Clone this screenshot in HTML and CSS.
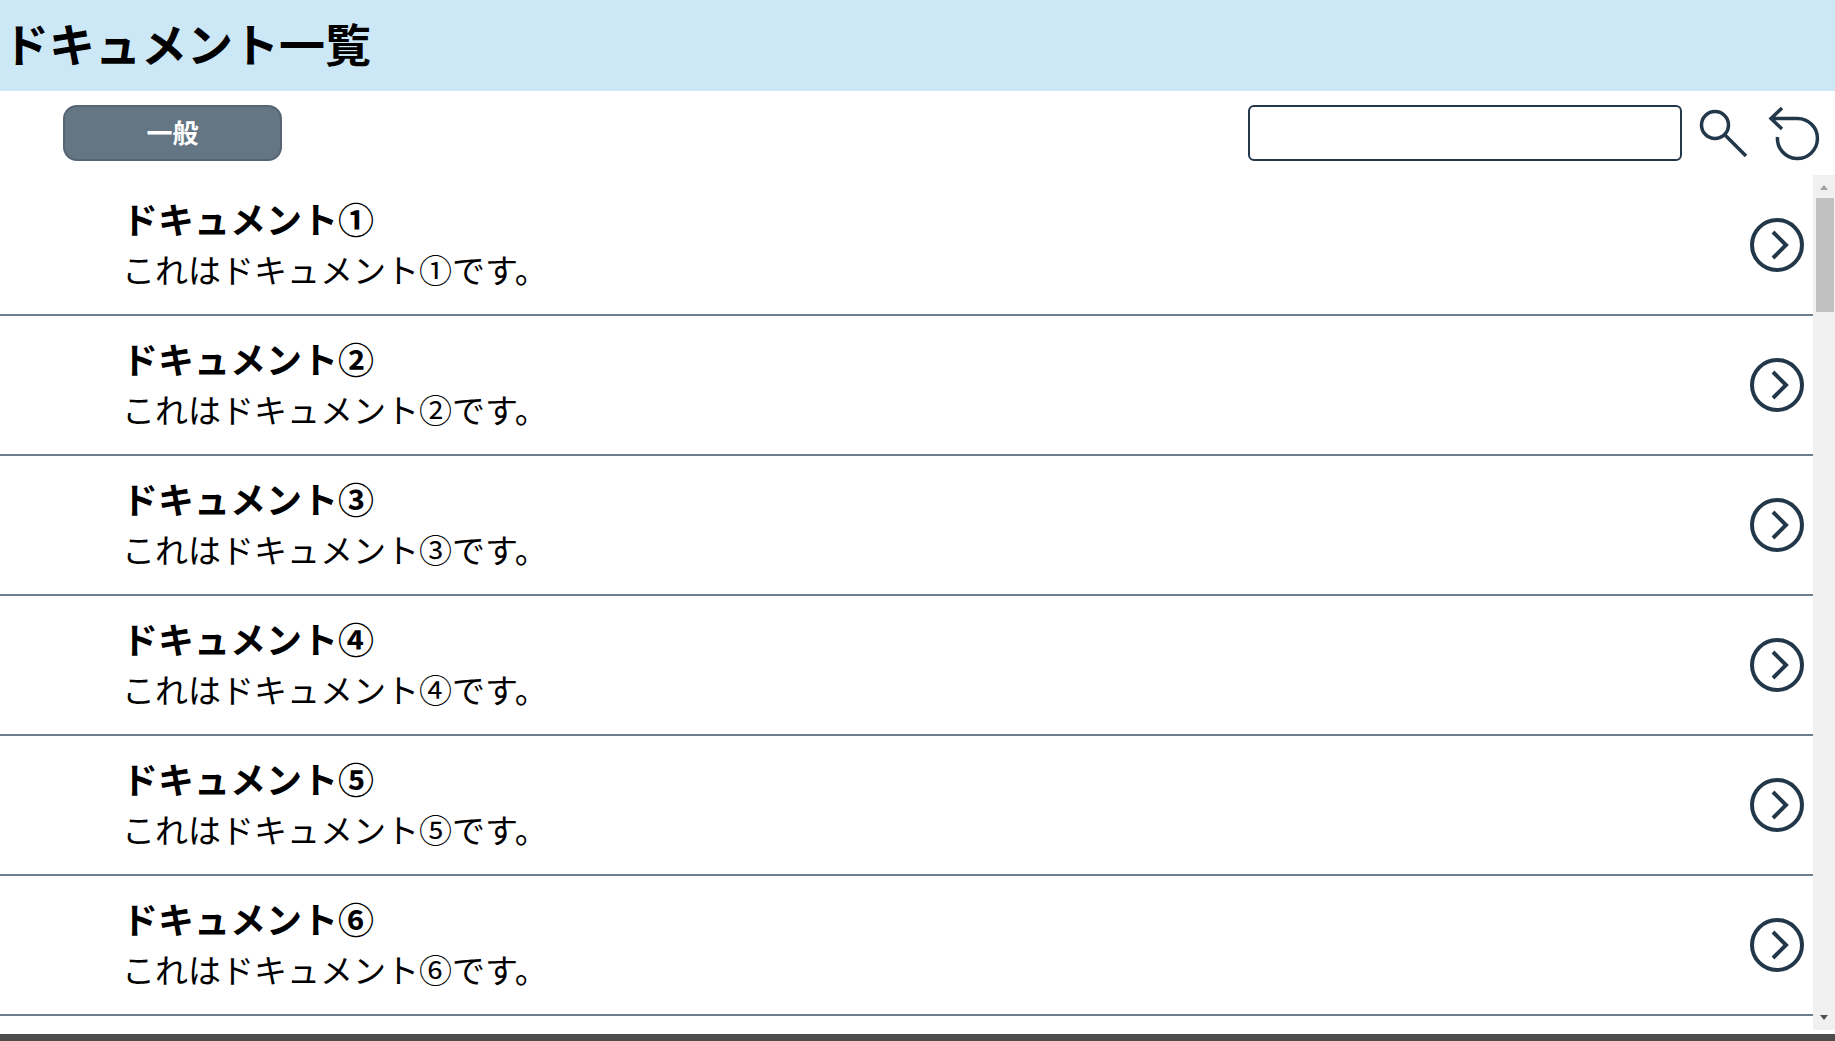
FILE: index.html
```
<!DOCTYPE html>
<html lang="ja">
<head>
    <meta charset="UTF-8">
    <meta name="viewport" content="width=device-width, initial-scale=1.0">
    <title>ドキュメント一覧</title>
    <link rel="stylesheet" href="styles.css">
</head>
<body>
    <header class="header">
        <h1>ドキュメント一覧</h1>
    </header>

    <!-- Category and search -->
    <div class="toolbar">
        <button type="button" class="category">一般</button>
        <form class="search" onsubmit="return false">
            <input type="text" id="keyword" class="keyword" aria-label="検索">
            <button type="submit" class="icon-btn" aria-label="検索">
                <svg width="54" height="56" viewBox="0 0 54 56">
                    <circle cx="18" cy="20" r="13.500"/>
                    <path d="M27.500 29.500 L49 51"/>
                </svg>
            </button>
            <button type="reset" class="icon-btn" aria-label="リセット">
                <svg width="54" height="56" viewBox="0 0 54 56">
                    <path d="M16 3 L5 13.500 L16 24 M5 13.500 H31.500 A20 20 0 1 1 11.500 32"/>
                </svg>
            </button>
        </form>
    </div>

    <!-- Document list -->
    <main class="content">
        <ul class="list">
            <li>
                <a href="#">
                    <div class="text">
                        <h2>ドキュメント①</h2>
                        <p>これはドキュメント①です。</p>
                    </div>
                    <svg width="54" height="54"><use href="#arrow"/></svg>
                </a>
            </li>
            <li>
                <a href="#">
                    <div class="text">
                        <h2>ドキュメント②</h2>
                        <p>これはドキュメント②です。</p>
                    </div>
                    <svg width="54" height="54"><use href="#arrow"/></svg>
                </a>
            </li>
            <li>
                <a href="#">
                    <div class="text">
                        <h2>ドキュメント③</h2>
                        <p>これはドキュメント③です。</p>
                    </div>
                    <svg width="54" height="54"><use href="#arrow"/></svg>
                </a>
            </li>
            <li>
                <a href="#">
                    <div class="text">
                        <h2>ドキュメント④</h2>
                        <p>これはドキュメント④です。</p>
                    </div>
                    <svg width="54" height="54"><use href="#arrow"/></svg>
                </a>
            </li>
            <li>
                <a href="#">
                    <div class="text">
                        <h2>ドキュメント⑤</h2>
                        <p>これはドキュメント⑤です。</p>
                    </div>
                    <svg width="54" height="54"><use href="#arrow"/></svg>
                </a>
            </li>
            <li>
                <a href="#">
                    <div class="text">
                        <h2>ドキュメント⑥</h2>
                        <p>これはドキュメント⑥です。</p>
                    </div>
                    <svg width="54" height="54"><use href="#arrow"/></svg>
                </a>
            </li>
        </ul>
        <div class="scrollbar" aria-hidden="true">
            <span class="up"></span>
            <span class="thumb"></span>
            <span class="down"></span>
        </div>
    </main>

    <footer class="footer"></footer>

    <!-- Shared row icon -->
    <svg class="defs" width="0" height="0">
        <symbol id="arrow" viewBox="0 0 54 54">
            <circle cx="27" cy="27" r="25"/>
            <path d="M23 14 L36 27 L23 40"/>
        </symbol>
    </svg>
</body>
</html>
```
FILE: styles.css
```
* {
    box-sizing: border-box;
}
body {
    margin: 0;
    min-height: 100vh;
    display: flex;
    flex-direction: column;
    background-color: #fff;
    color: #000;
    font-family: Meiryo, "Noto Sans CJK JP", sans-serif;
}
.header {
    background-color: #cce8f6;
    padding: 10px 3px 17px;
}
.header h1 {
    margin: 0;
    font-size: 46px;
    line-height: 64px;
}
.toolbar {
    display: flex;
    justify-content: space-between;
    padding: 14px 15px 14px 63px;
}
.category {
    width: 219px;
    height: 56px;
    padding: 0 0 4px;
    background-color: #647584;
    border: 2px solid #566473;
    border-radius: 14px;
    color: #fff;
    font-family: inherit;
    font-size: 26px;
    font-weight: bold;
    cursor: pointer;
}
.search {
    display: flex;
    gap: 15px;
}
.keyword {
    width: 434px;
    height: 56px;
    padding: 0 12px;
    border: 2px solid #22384a;
    border-radius: 6px;
    font-family: inherit;
    font-size: 26px;
}
.icon-btn {
    padding: 0;
    border: none;
    background: none;
    cursor: pointer;
}
svg {
    display: block;
    fill: none;
    stroke: #22384a;
    stroke-width: 3.5;
}
.defs {
    position: absolute;
}
.content {
    flex: 1;
    display: flex;
}
.list {
    flex: 1;
    margin: 0;
    padding: 1px 0 0;
    list-style: none;
}
.list a {
    display: flex;
    justify-content: space-between;
    align-items: center;
    height: 140px;
    padding: 0 9px 0 122px;
    border-bottom: 2px solid #6f7e8d;
    color: inherit;
    text-decoration: none;
}
.list .text {
    padding-bottom: 2px;
}
.list h2 {
    margin: 0;
    font-size: 36px;
    line-height: 50px;
}
.list p {
    margin: 0;
    font-size: 33px;
    line-height: 52px;
}
.list svg {
    stroke-width: 4;
}
.scrollbar {
    width: 22px;
    display: flex;
    flex-direction: column;
    align-items: center;
    padding: 10px 0;
    background-color: #f0f0f0;
}
.scrollbar .up,
.scrollbar .down {
    border: 4px solid transparent;
}
.scrollbar .up {
    border-top: none;
    border-bottom: 5px solid #a0a0a0;
}
.scrollbar .down {
    margin-top: auto;
    border-bottom: none;
    border-top: 5px solid #505050;
}
.scrollbar .thumb {
    width: 18px;
    height: 114px;
    margin: 8px 0 0 2px;
    background-color: #c1c1c1;
}
.footer {
    height: 7px;
    margin-top: 4px;
    background-color: #4d4d4d;
}
```
